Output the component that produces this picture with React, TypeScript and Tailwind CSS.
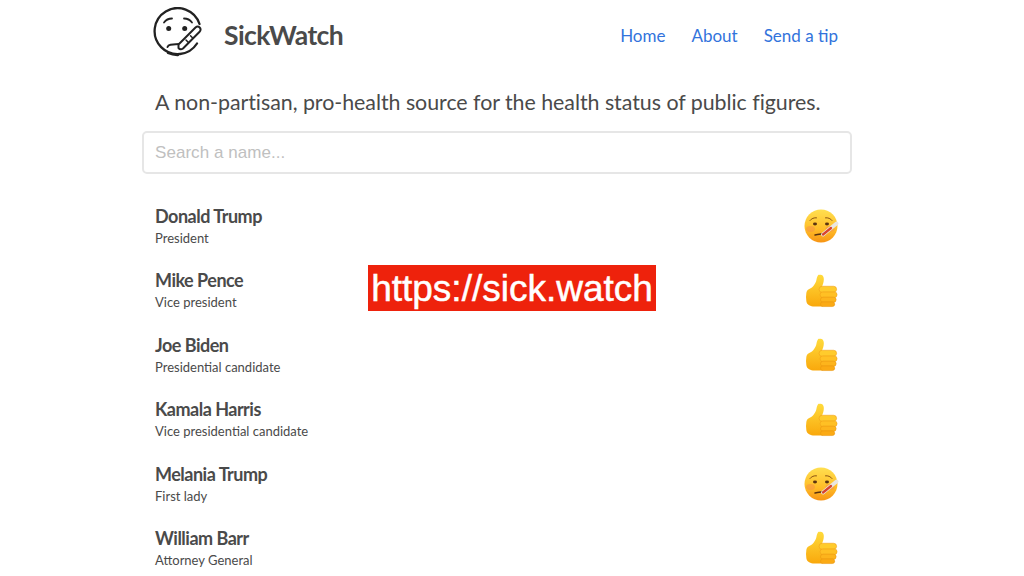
const people = [
  { name: "Donald Trump", role: "President", sick: true },
  { name: "Mike Pence", role: "Vice president", sick: false },
  { name: "Joe Biden", role: "Presidential candidate", sick: false },
  { name: "Kamala Harris", role: "Vice presidential candidate", sick: false },
  { name: "Melania Trump", role: "First lady", sick: true },
  { name: "William Barr", role: "Attorney General", sick: false },
];

function Logo() {
  return (
    <svg width="52" height="50" viewBox="0 0 52 50" fill="none" stroke="#222" strokeWidth="2.300" strokeLinecap="round" strokeLinejoin="round" className="mt-[7px] self-start">
      <path d="M45 36.500A23 23 0 1 1 47.500 17" />
      <path d="M26 48A23 23 0 0 1 16 46" />
      <circle cx="16.700" cy="21.500" r="2.500" fill="#222" stroke="none" />
      <circle cx="32.700" cy="21.500" r="2.500" fill="#222" stroke="none" />
      <path d="M12 15.500c2-2.800 5-4 8-4" strokeWidth="1.800" />
      <path d="M32 11.500c3 0 6 1.200 8 4" strokeWidth="1.800" />
      <path d="M15.500 40c.5-1.500 1.700-2 3-2.200 3-.4 6-.8 9-.8" strokeWidth="2" />
      <path d="M26.500 37.500L43.500 20.500c1.300-1.200 3-1.200 4.200 0s1.200 3-.1 4.200L31 41.500c-1.500 1-3.500.8-4.500-.4z" fill="#fff" strokeWidth="2" />
      <path d="M34 33l2.500 2.500M38.500 28.700l2.500 2.500" strokeWidth="1.500" />
    </svg>
  );
}

function SickEmoji() {
  return (
    <svg width="36" height="36" viewBox="0 0 36 36">
      <defs>
        <linearGradient id="sickFace" x1="0" y1="0" x2="0" y2="1">
          <stop offset="0%" stopColor="#ffdf50" />
          <stop offset="60%" stopColor="#ffbd28" />
          <stop offset="100%" stopColor="#f79414" />
        </linearGradient>
      </defs>
      <circle cx="18" cy="18" r="16.500" fill="url(#sickFace)" />
      <ellipse cx="7.500" cy="21" rx="4.500" ry="3" fill="#f58a4e" opacity=".45" />
      <ellipse cx="27" cy="21" rx="4.500" ry="3" fill="#f58a4e" opacity=".45" />
      <ellipse cx="12" cy="16" rx="2" ry="1.400" fill="#5a3310" />
      <ellipse cx="24" cy="16" rx="2" ry="1.400" fill="#5a3310" />
      <path d="M7 12.500c1.500-2 4-3 6.500-2.700M22.500 9.800c2.500-.3 5 .7 6.500 2.700" fill="none" stroke="#8a5212" strokeWidth="1" strokeLinecap="round" />
      <path d="M12 27c3-.8 6-1 9-1.500" fill="none" stroke="#5a3310" strokeWidth="1.400" strokeLinecap="round" />
      <path d="M20 26.500L33.500 15.500" stroke="#e9e6e2" strokeWidth="3.800" strokeLinecap="round" />
      <path d="M20 26.500L28 20" stroke="#d8432e" strokeWidth="2.300" strokeLinecap="round" />
    </svg>
  );
}

function ThumbEmoji() {
  return (
    <svg width="34" height="35" viewBox="0 0 36 36">
      <defs>
        <linearGradient id="thumbFill" x1="0" y1="0" x2="0" y2="1">
          <stop offset="0%" stopColor="#ffdb3c" />
          <stop offset="100%" stopColor="#f9a80c" />
        </linearGradient>
      </defs>
      <path d="M16 1.500c2.800-.8 5 1 5 4.200 0 3.200-1 5.800-2 8.300l1 21H11c-4 0-8-1.500-8.500-5.500-.5-3-.5-6 0-9 .4-2.500 2-3.500 4-4.500 3-1.600 6-5.500 6.700-9.500.3-2 1-4.800 2.800-5.500z" fill="url(#thumbFill)" />
      <rect x="16" y="13.500" width="18.500" height="6.500" rx="3.200" fill="#ffcb2c" stroke="#f0a018" strokeWidth=".6" />
      <rect x="17" y="19.500" width="18" height="6" rx="3" fill="#ffc024" stroke="#f0a018" strokeWidth=".6" />
      <rect x="17.500" y="25" width="16.500" height="5.500" rx="2.700" fill="#fdb41c" stroke="#ea9410" strokeWidth=".6" />
      <rect x="17.500" y="30" width="15" height="5" rx="2.500" fill="#fbaa14" stroke="#ea9410" strokeWidth=".6" />
    </svg>
  );
}

export default function App() {
  return (
    <div className="relative h-[576px] overflow-hidden bg-white font-['Lato','Open_Sans',sans-serif] text-[#4a4a4a]">
      <div className="ml-[142px] w-[709px]">
        <header className="flex h-[72px] items-center pb-[1px] pl-[10px] pr-[13px]">
          <Logo />
          <span className="ml-[20px] text-[26.500px] font-bold tracking-[-0.6px] text-[#4a4a4a]">SickWatch</span>
          <nav className="ml-auto flex gap-[26px] text-[17px] text-[#3273dc]">
            <a>Home</a>
            <a>About</a>
            <a>Send a tip</a>
          </nav>
        </header>

        <p className="mt-[15px] pl-[13px] text-[21.400px] leading-[30px] tracking-[-0.04px] text-[#4a4a4a]">
          A non-partisan, pro-health source for the health status of public figures.
        </p>

        <input
          readOnly
          placeholder="Search a name..."
          className="mt-[14px] block h-[43px] w-[710px] rounded-[5px] border-2 border-[#e6e6e6] px-[11px] font-['Liberation_Sans',sans-serif] text-[17px] tracking-[0.05px] outline-none placeholder:text-[#c0c0c0]"
        />

        <ul className="mt-[29px] flex flex-col pl-[13px] pr-[12px]">
          {people.map((p) => (
            <li key={p.name} className="flex h-[64.400px] items-start justify-between">
              <div>
                <div className="text-[18px] font-bold leading-[26px] tracking-[-0.5px] text-[#4a4a4a]">{p.name}</div>
                <div className="text-[13px] leading-[18px] text-[#4a4a4a]">{p.role}</div>
              </div>
              <div className="mt-[5px] flex h-[36px] w-[36px] items-center justify-center">{p.sick ? <SickEmoji /> : <ThumbEmoji />}</div>
            </li>
          ))}
        </ul>
      </div>

      <div className="absolute left-[368px] top-[265px] flex h-[46px] w-[288px] items-center justify-center bg-[#ee220c] pt-[1px] font-['Liberation_Sans',sans-serif] text-[37px] text-white [-webkit-text-stroke:0.5px_white]">
        https://sick.watch
      </div>
    </div>
  );
}
